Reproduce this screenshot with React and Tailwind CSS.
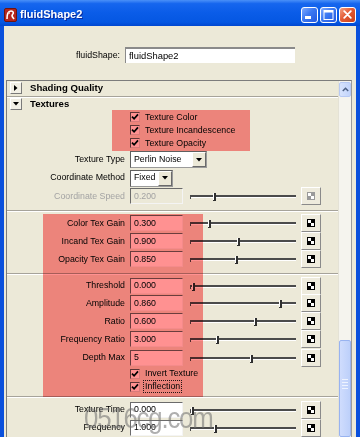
import React from "react";

function MayaIcon() {
  return (
    <svg width="13" height="14" viewBox="0 0 13 14">
      <rect x="0.5" y="0.5" width="12" height="13" rx="1.5" fill="#B3261E" stroke="#6E1410" />
      <path d="M3 11 C3 6 4 3 7 3 C9.5 3 10 5 8.5 6.5 C7 8 9 9.5 10 11" fill="none" stroke="#FFFFFF" strokeWidth="1.6" />
      <circle cx="5" cy="5" r="1" fill="#F3D0C8" />
    </svg>
  );
}

function WinButton({ kind }) {
  if (kind === "close") {
    return (
      <div className="w-[17px] h-[16px] rounded-[3px] border border-white flex items-center justify-center bg-[linear-gradient(135deg,#F4A183_0%,#E35A34_45%,#C8401A_100%)]">
        <svg width="9" height="9" viewBox="0 0 9 9">
          <path d="M1.2 1.2L7.8 7.8M7.8 1.2L1.2 7.8" stroke="#FFFFFF" strokeWidth="1.8" strokeLinecap="round" />
        </svg>
      </div>
    );
  }
  return (
    <div className="w-[17px] h-[16px] rounded-[3px] border border-white flex items-center justify-center bg-[linear-gradient(135deg,#7FAAFF_0%,#3B78F2_45%,#2459E0_100%)]">
      {kind === "min" ? (
        <svg width="11" height="10" viewBox="0 0 11 10">
          <rect x="1" y="6" width="6" height="3" fill="#FFFFFF" />
        </svg>
      ) : (
        <svg width="11" height="10" viewBox="0 0 11 10">
          <rect x="1" y="0.5" width="9" height="9" fill="none" stroke="#FFFFFF" strokeWidth="1" />
          <rect x="1" y="0" width="9" height="2.5" fill="#FFFFFF" />
        </svg>
      )}
    </div>
  );
}

function TitleBar() {
  return (
    <div className="h-[26px] flex items-center pt-[3px] pl-[4px] pr-[4px] bg-[linear-gradient(to_bottom,#4A90F8_0%,#1666EE_14%,#0A5CE8_50%,#0557E2_85%,#0147D0_100%)]">
      <MayaIcon />
      <span className="ml-[3px] text-white font-bold text-[11px] [text-shadow:1px_1px_0_#0A2A9C]">
        fluidShape2
      </span>
      <div className="ml-auto flex gap-[2px]">
        <WinButton kind="min" />
        <WinButton kind="max" />
        <WinButton kind="close" />
      </div>
    </div>
  );
}

function Field({ value, disabled }) {
  return (
    <div
      className={`w-[53px] h-[16px] flex items-center pl-[3px] border-t border-l border-t-[#6b6b6b] border-l-[#6b6b6b] border-b border-r border-b-[#f4f4f4] border-r-[#f4f4f4] ${
        disabled ? "bg-[#ECE9D8] text-[#a3a3a3]" : "bg-white text-black"
      }`}
    >
      {value}
    </div>
  );
}

function Slider({ pos }) {
  return (
    <div className="relative w-[106px] h-[18px]">
      <div className="absolute left-0 right-0 top-[8px] h-[2px] bg-[#4b4b4b]" />
      <div className="absolute left-0 right-0 top-[10px] h-[1px] bg-white" />
      <div className="absolute left-0 top-[8px] w-[1px] h-[4px] bg-[#4b4b4b]" />
      <div
        className="absolute top-[6px] w-[3px] h-[8px] bg-white border-r-2 border-b border-[#2f2f2f]"
        style={{ left: pos }}
      />
    </div>
  );
}

function MapButton({ disabled }) {
  const c = disabled ? "#9a9a9a" : "#000000";
  return (
    <div className="w-[20px] h-[18px] flex items-center justify-center border-t border-l border-white border-b border-r border-b-[#8a8a8a] border-r-[#8a8a8a] bg-[#EEEBDD]">
      <svg width="8" height="8" viewBox="0 0 8 8">
        <rect x="0.5" y="0.5" width="7" height="7" fill="#FFFFFF" stroke={c} strokeWidth="1" />
        <rect x="4" y="0" width="4" height="4" fill={c} />
        <rect x="0" y="4" width="4" height="4" fill={c} />
      </svg>
    </div>
  );
}

function SliderRow({ label, value, pos, disabled, h = "h-[18px]" }) {
  return (
    <div className={`flex items-center ${h}`}>
      <div className={`w-[118px] text-right ${disabled ? "text-[#a3a3a3]" : "text-black"}`}>{label}</div>
      <div className="ml-[5px]">
        <Field value={value} disabled={disabled} />
      </div>
      <div className="ml-[7px]">
        <Slider pos={pos} />
      </div>
      <div className="ml-[5px]">
        <MapButton disabled={disabled} />
      </div>
    </div>
  );
}

function CheckRow({ label, focus }) {
  return (
    <div className="flex items-center h-[13px] pl-[123px]">
      <div className="w-[10px] h-[10px] bg-white border-t border-l border-[#5d5d5d] border-b border-r border-b-[#d8d8d8] border-r-[#d8d8d8] flex items-center justify-center">
        <svg width="8" height="8" viewBox="0 0 8 8">
          <path d="M1 3.6 L3.1 5.8 L7 1.4" fill="none" stroke="#000000" strokeWidth="1.7" />
        </svg>
      </div>
      <span className={`ml-[4px] px-[1px] leading-[11px] ${focus ? "outline outline-1 outline-dotted outline-[#222]" : ""}`}>
        {label}
      </span>
    </div>
  );
}

function Dropdown({ value, wide }) {
  return (
    <div
      className={`flex h-[17px] border-t border-l border-[#5f5f5f] border-b border-r border-b-[#9a9a9a] border-r-[#9a9a9a] bg-white ${
        wide ? "w-[77px]" : "w-[43px]"
      }`}
    >
      <div className="flex-1 flex items-center pl-[3px]">{value}</div>
      <div className="w-[14px] flex items-center justify-center border-t border-l border-white border-b border-r border-b-[#6a6a6a] border-r-[#6a6a6a] bg-[#ECE9D8]">
        <svg width="6" height="4" viewBox="0 0 6 4">
          <path d="M0 0 H6 L3 3.5 Z" fill="#000000" />
        </svg>
      </div>
    </div>
  );
}

function DropRow({ label, value, wide, h }) {
  return (
    <div className={`flex items-center ${h}`}>
      <div className="w-[118px] text-right">{label}</div>
      <div className="ml-[5px]">
        <Dropdown value={value} wide={wide} />
      </div>
    </div>
  );
}

function Separator() {
  return <div className="h-[2px] border-t border-[#a6a39a] border-b border-b-white" />;
}

function SectionHeader({ label, open, h }) {
  return (
    <div className={`flex items-center pl-[3px] ${h}`}>
      <div className="w-[12px] h-[12px] flex items-center justify-center border-t border-l border-white border-b border-r border-b-[#7a7a7a] border-r-[#7a7a7a] bg-[#F2F0E6]">
        {open ? (
          <svg width="6" height="4" viewBox="0 0 6 4">
            <path d="M0 0 H6 L3 3.5 Z" fill="#000000" />
          </svg>
        ) : (
          <svg width="4" height="6" viewBox="0 0 4 6">
            <path d="M0 0 V6 L3.5 3 Z" fill="#000000" />
          </svg>
        )}
      </div>
      <span className="ml-[8px] font-bold text-[9.6px]">{label}</span>
    </div>
  );
}

function Scrollbar() {
  return (
    <div className="w-[13px] flex flex-col bg-[#F5F4EE] border-l border-[#E4E2D6]">
      <div className="mt-[1px] h-[15px] rounded-[2px] border border-[#B7C9F3] bg-[linear-gradient(to_right,#D7E3FD,#C2D4FB)] flex items-center justify-center">
        <svg width="7" height="5" viewBox="0 0 7 5">
          <path d="M0.8 4 L3.5 1.3 L6.2 4" fill="none" stroke="#4D6185" strokeWidth="1.5" />
        </svg>
      </div>
      <div className="h-[243px]" />
      <div className="flex-1 rounded-[2px] border border-[#98B3F0] bg-[linear-gradient(to_right,#CFDCFD,#BDD0FA)] flex flex-col items-center pt-[38px] gap-[2px]">
        <div className="w-[6px] h-[1px] bg-[#EEF3FF]" />
        <div className="w-[6px] h-[1px] bg-[#EEF3FF]" />
        <div className="w-[6px] h-[1px] bg-[#EEF3FF]" />
        <div className="w-[6px] h-[1px] bg-[#EEF3FF]" />
      </div>
    </div>
  );
}

export default function App() {
  return (
    <div className="relative w-[360px] h-[437px] overflow-hidden bg-[#0A50DC] font-['Liberation_Sans',Arial,sans-serif] text-[8.8px] text-black">
      <TitleBar />
      <div className="mx-[4px] h-[411px] bg-[#ECE9D8] flex flex-col">
        {/* shape name */}
        <div className="h-[54px] flex items-start pt-[21px]">
          <div className="w-[116px] text-right leading-[16px]">fluidShape:</div>
          <div className="ml-[5px] w-[170px] h-[16px] flex items-center pl-[3px] bg-white border-t-2 border-l border-[#8a8a8a] text-[9.4px]">
            fluidShape2
          </div>
        </div>

        {/* attribute panel */}
        <div className="ml-[2px] mr-[4px] flex-1 flex border-t border-l border-[#7c7c7c] border-r border-r-[#9c9c9c] overflow-hidden">
          <div className="flex-1 flex flex-col">
            <SectionHeader label="Shading Quality" h="h-[15px]" />
            <Separator />
            <SectionHeader label="Textures" open h="h-[13px]" />
            <CheckRow label="Texture Color" />
            <CheckRow label="Texture Incandescence" />
            <CheckRow label="Texture Opacity" />
            <div className="h-[1px]" />
            <DropRow label="Texture Type" value="Perlin Noise" wide h="h-[18px]" />
            <DropRow label="Coordinate Method" value="Fixed" h="h-[19px]" />
            <SliderRow label="Coordinate Speed" value="0.200" pos={23} disabled />
            <div className="h-[5px]" />
            <Separator />
            <div className="h-[2px]" />
            <SliderRow label="Color Tex Gain" value="0.300" pos={18} />
            <SliderRow label="Incand Tex Gain" value="0.900" pos={47} />
            <SliderRow label="Opacity Tex Gain" value="0.850" pos={45} />
            <div className="h-[5px]" />
            <Separator />
            <div className="h-[2px]" />
            <SliderRow label="Threshold" value="0.000" pos={2} h="h-[17px]" />
            <SliderRow label="Amplitude" value="0.860" pos={89} />
            <SliderRow label="Ratio" value="0.600" pos={64} />
            <SliderRow label="Frequency Ratio" value="3.000" pos={26} />
            <SliderRow label="Depth Max" value="5" pos={60} h="h-[19px]" />
            <CheckRow label="Invert Texture" />
            <CheckRow label="Inflection" focus />
            <div className="h-[3px]" />
            <Separator />
            <div className="h-[3px]" />
            <SliderRow label="Texture Time" value="0.000" pos={1} />
            <SliderRow label="Frequency" value="1.000" pos={24} />
          </div>
          <Scrollbar />
        </div>
      </div>

      {/* highlight marks */}
      <div className="absolute left-[112px] top-[110px] w-[138px] h-[41px] bg-[#FF9191] mix-blend-multiply" />
      <div className="absolute left-[43px] top-[214px] w-[160px] h-[183px] bg-[#FF9191] mix-blend-multiply" />

      {/* watermark */}
      <div className="absolute left-[84px] top-[400px] origin-left scale-x-[0.86] text-[30px] leading-[36px] tracking-[-1.4px] text-[#6e6e6e] opacity-55">
        0516cg.com
      </div>
    </div>
  );
}
